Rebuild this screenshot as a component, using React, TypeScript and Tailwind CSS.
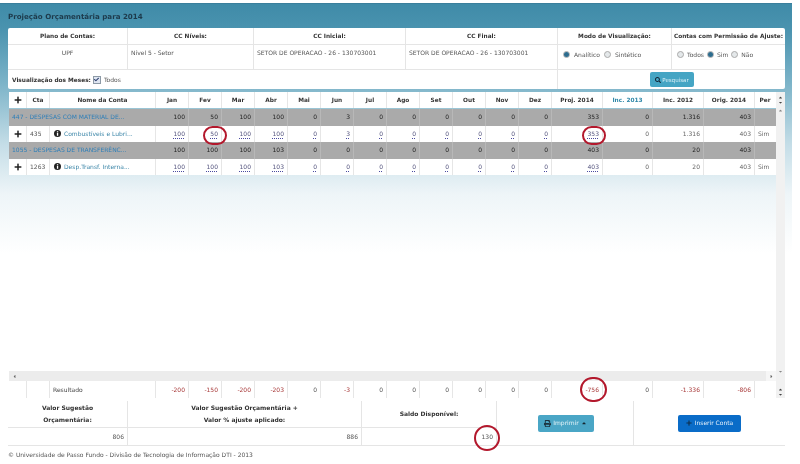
import React from "react";
import { FaPlus, FaPrint, FaSearch, FaCaretUp, FaCaretDown, FaCaretLeft, FaCaretRight, FaCheck } from "react-icons/fa";

const GRID = "grid grid-cols-[18px_23px_106px_repeat(12,33px)_51px_50px_51px_51px_20px]";
const HEAD = ["Jan","Fev","Mar","Abr","Mai","Jun","Jul","Ago","Set","Out","Nov","Dez","Proj. 2014","Inc. 2013","Inc. 2012","Orig. 2014"];

function Circle({ className }: { className: string }) {
  return <span className={"absolute rounded-full border-2 border-[#b3182c] pointer-events-none " + className} />;
}

function Radio({ on }: { on?: boolean }) {
  return (
    <span className="inline-flex h-[7px] w-[7px] shrink-0 items-center justify-center rounded-full border border-[#aaa] bg-[#e4e8ea]">
      {on && <span className="h-[5px] w-[5px] rounded-full bg-[#2d6c8e]" />}
    </span>
  );
}

function InfoDot() {
  return (
    <svg width="7" height="7" viewBox="0 0 14 14" className="mr-[3px] shrink-0">
      <circle cx="7" cy="7" r="7" fill="#222" />
      <rect x="5.8" y="2.4" width="2.6" height="2.4" fill="#fff" />
      <rect x="5.8" y="6" width="2.6" height="5.6" fill="#fff" />
    </svg>
  );
}

function PlusCell() {
  return (
    <div className="flex items-center justify-center border-r border-[#e6e6e6]">
      <FaPlus className="text-[8px] text-[#222]" />
    </div>
  );
}

function GroupRow({ name, values }: { name: string; values: string[] }) {
  return (
    <div className={GRID + " h-[16.5px] bg-[#aaaaaa]"}>
      <div className="col-span-3 flex items-center truncate pl-[3px] text-[#2f7fb8]">{name}</div>
      {values.map((v, i) => (
        <div key={i} className="flex items-center justify-end border-r border-[#b8b8b8] pr-[3px] text-[#222]">{v}</div>
      ))}
      <div />
    </div>
  );
}

function ItemRow({ cta, name, values, circles }: { cta: string; name: string; values: string[]; circles?: boolean }) {
  return (
    <div className={GRID + " h-[16.5px] bg-white"}>
      <PlusCell />
      <div className="flex items-center border-r border-[#e6e6e6] pl-[3px] text-[#555]">{cta}</div>
      <div className="flex items-center border-r border-[#e6e6e6] pl-[4px] text-[#3c86a8]">
        <InfoDot />
        <span className="truncate">{name}</span>
      </div>
      {values.map((v, i) => {
        const linked = i < 13;
        return (
          <div key={i} className="relative flex items-center justify-end border-r border-[#e6e6e6] pr-[3px] text-[#666]">
            {linked ? (
              <span className="text-[#55557f] underline decoration-dotted decoration-[#4a4aa0] underline-offset-[1.5px]">{v}</span>
            ) : (
              v
            )}
            {circles && i === 1 && <Circle className="left-[14px] top-[0px] h-[19px] w-[24px]" />}
            {circles && i === 12 && <Circle className="left-[30px] top-[0px] h-[19px] w-[24px]" />}
          </div>
        );
      })}
      <div className="flex items-center pl-[3px] text-[#666]">Sim</div>
    </div>
  );
}

export default function App() {
  const resultValues = ["-200","-150","-200","-203","0","-3","0","0","0","0","0","0","-756","0","-1.336","-806"];
  return (
    <div className="relative h-[464px] w-[800px] overflow-hidden bg-white pt-[3px] font-['DejaVu_Sans',sans-serif] text-[6px] leading-[8px] text-[#444] blur-[0.3px]">
      <div className="h-[455px] w-[792px] border-t border-[#3a7f9c] bg-[linear-gradient(to_bottom,#3f8ba8_0px,#4a93af_25px,#7db4c9_80px,#c4dde7_140px,#eef5f8_190px,#ffffff_250px)] px-2">
        <div className="flex h-[24px] items-center pt-[1px] text-[7.1px] font-bold text-[#1d3a4b]">Projeção Orçamentária para 2014</div>

        <div className="w-[777px] overflow-hidden rounded-[2px] bg-white text-[#555]">
          <div className="grid h-[17px] grid-cols-[120px_126px_152px_152px_114px_113px] border-b border-[#e5e5e5] text-[5.8px] font-bold text-[#333]">
            <div className="flex items-center justify-center border-r border-[#e5e5e5]">Plano de Contas:</div>
            <div className="flex items-center justify-center border-r border-[#e5e5e5]">CC Níveis:</div>
            <div className="flex items-center justify-center border-r border-[#e5e5e5]">CC Inicial:</div>
            <div className="flex items-center justify-center border-r border-[#e5e5e5]">CC Final:</div>
            <div className="flex items-center justify-center border-r border-[#e5e5e5]">Modo de Visualização:</div>
            <div className="flex items-center justify-center whitespace-nowrap">Contas com Permissão de Ajuste:</div>
          </div>
          <div className="grid h-[25px] grid-cols-[120px_126px_152px_152px_114px_113px] border-b border-[#e5e5e5]">
            <div className="border-r border-[#e5e5e5] pt-[4px] text-center">UPF</div>
            <div className="border-r border-[#e5e5e5] pl-[3px] pt-[4px]">Nível 5 - Setor</div>
            <div className="border-r border-[#e5e5e5] pl-[3px] pt-[4px]">SETOR DE OPERACAO - 26 - 130703001</div>
            <div className="border-r border-[#e5e5e5] pl-[3px] pt-[4px]">SETOR DE OPERACAO - 26 - 130703001</div>
            <div className="flex items-start gap-[4px] border-r border-[#e5e5e5] pl-[5px] pt-[6px]">
              <Radio on /><span>Analítico</span><Radio /><span>Sintético</span>
            </div>
            <div className="flex items-start gap-[3px] pl-[5px] pt-[6px]">
              <Radio /><span>Todos</span><Radio on /><span>Sim</span><Radio /><span>Não</span>
            </div>
          </div>
          <div className="grid h-[19px] grid-cols-[550px_227px]">
            <div className="flex items-center border-r border-[#e5e5e5] pl-[4px]">
              <span className="text-[5.8px] font-bold text-[#333]">Visualização dos Meses:</span>
              <span className="ml-[2px] mr-[3px] flex h-[8px] w-[8px] items-center justify-center border border-[#8d9aa6] bg-[#dfe6f2]">
                <FaCheck className="text-[5px] text-[#2b3d6b]" />
              </span>
              <span>Todos</span>
            </div>
            <div className="flex items-center justify-end pr-[91px]">
              <div className="flex h-[15px] w-[44px] items-center justify-center gap-[1px] rounded-[2px] bg-[#45a5c4] text-[5.5px] text-[#d8eef5]">
                <FaSearch className="text-[6px] text-[#123]" />
                <span>Pesquisar</span>
              </div>
            </div>
          </div>
        </div>

        <div className="mt-[3px] flex w-[777px] pl-[1px]">
          <div className="w-[767px]">
            <div className={GRID + " h-[16px] items-stretch bg-white text-[5.8px] font-bold text-[#333]"}>
              <PlusCell />
              <div className="flex items-center justify-center border-r border-[#e6e6e6]">Cta</div>
              <div className="flex items-center justify-center border-r border-[#e6e6e6]">Nome da Conta</div>
              {HEAD.map((h) => (
                <div key={h} className={"flex items-center justify-center border-r border-[#e6e6e6] " + (h === "Inc. 2013" ? "text-[#2f87a8]" : "")}>{h}</div>
              ))}
              <div className="flex items-center justify-center">Per</div>
            </div>
            <div className="mt-[1px] flex flex-col">
              <GroupRow name="447 - DESPESAS COM MATERIAL DE..." values={["100","50","100","100","0","3","0","0","0","0","0","0","353","0","1.316","403"]} />
              <ItemRow cta="435" name="Combustíveis e Lubri..." circles values={["100","50","100","100","0","3","0","0","0","0","0","0","353","0","1.316","403"]} />
              <GroupRow name="1055 - DESPESAS DE TRANSFERÊNC..." values={["100","100","100","103","0","0","0","0","0","0","0","0","403","0","20","403"]} />
              <ItemRow cta="1263" name="Desp.Transf. Interna..." values={["100","100","100","103","0","0","0","0","0","0","0","0","403","0","20","403"]} />
            </div>
            <div className="h-[196px]" />
            <div className="flex h-[10px] items-center justify-between bg-[#ececec]">
              <FaCaretLeft className="ml-[3px] text-[5px] text-[#666]" />
              <span className="flex h-[10px] w-[10px] items-center justify-center bg-[#f6f6f6]"><FaCaretRight className="text-[5px] text-[#666]" /></span>
            </div>
            <div className={GRID + " h-[17px] bg-white"}>
              <div className="border-r border-[#e6e6e6]" />
              <div className="border-r border-[#e6e6e6]" />
              <div className="flex items-center border-r border-[#e6e6e6] pl-[3px]">Resultado</div>
              {resultValues.map((v, i) => (
                <div key={i} className={"relative flex items-center justify-end border-r border-[#e6e6e6] pr-[3px] " + (v.startsWith("-") ? "text-[#a83a3a]" : "text-[#555]")}>
                  {v}
                  {i === 12 && <Circle className="left-[28px] top-[-4px] h-[25px] w-[27px]" />}
                </div>
              ))}
              <div />
            </div>
          </div>
          <div className="flex w-[9px] flex-col items-center bg-[#f1f1f1] text-[#444]">
            <FaCaretUp className="mt-[3px] text-[5px]" />
            <FaCaretDown className="text-[5px]" />
            <FaCaretUp className="mt-[3px] text-[5px] text-[#888]" />
            <div className="flex-1" />
            <FaCaretDown className="text-[5px] text-[#888]" />
            <div className="h-[13px]" />
            <FaCaretUp className="text-[5px]" />
            <FaCaretDown className="mb-[1px] text-[5px]" />
          </div>
        </div>

        <div className="mt-[3px] grid h-[45px] w-[777px] grid-cols-[120px_234px_135px_137px_151px] border-b border-[#e5e5e5] bg-white">
          <div className="flex flex-col border-r border-[#e5e5e5]">
            <div className="flex h-[27px] items-center justify-center border-b border-[#e5e5e5] text-center font-bold leading-[12px] text-[#333]">Valor Sugestão<br />Orçamentária:</div>
            <div className="flex flex-1 items-center justify-end pr-[3px] text-[#555]">806</div>
          </div>
          <div className="flex flex-col border-r border-[#e5e5e5]">
            <div className="flex h-[27px] items-center justify-center border-b border-[#e5e5e5] text-center font-bold leading-[12px] text-[#333]">Valor Sugestão Orçamentária +<br />Valor % ajuste aplicado:</div>
            <div className="flex flex-1 items-center justify-end pr-[3px] text-[#555]">886</div>
          </div>
          <div className="flex flex-col border-r border-[#e5e5e5]">
            <div className="flex h-[27px] items-center justify-center border-b border-[#e5e5e5] font-bold text-[#333]">Saldo Disponível:</div>
            <div className="relative flex flex-1 items-center justify-end pr-[3px] text-[#555]">
              <span>130</span>
              <Circle className="left-[112px] top-[-3px] h-[26px] w-[26px]" />
            </div>
          </div>
          <div className="flex items-center justify-center border-r border-[#e5e5e5]">
            <div className="ml-[1px] flex h-[17px] w-[56px] items-center justify-center gap-[2px] rounded-[2px] bg-[#4aa6c6] text-[#e4f3f8]">
              <FaPrint className="text-[7px] text-[#1d3340]" />
              <span>Imprimir</span>
              <FaCaretUp className="text-[6px] text-[#16262f]" />
            </div>
          </div>
          <div className="flex items-center justify-center">
            <div className="flex h-[17px] w-[63px] items-center justify-center gap-[3px] rounded-[2px] bg-[#0a6cc8] text-[#e6f0fa]">
              <FaPlus className="text-[6px] text-[#10304d]" />
              <span>Inserir Conta</span>
            </div>
          </div>
        </div>

        <div className="mt-[5px] text-[#555]">© Universidade de Passo Fundo - Divisão de Tecnologia de Informação DTI - 2013</div>
      </div>
    </div>
  );
}
